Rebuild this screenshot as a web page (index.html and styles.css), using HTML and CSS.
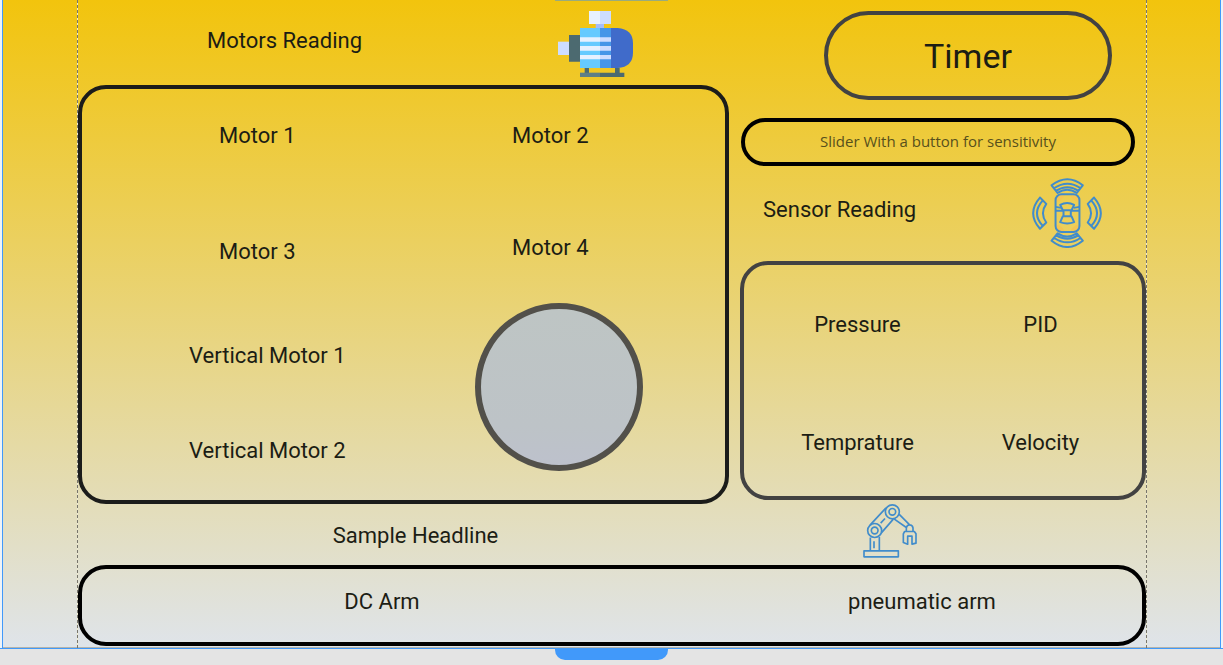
FILE: index.html
```html
<!DOCTYPE html>
<html lang="en">
<head>
<meta charset="utf-8">
<title>Motors Reading</title>
<link rel="stylesheet" href="styles.css">
</head>
<body>
<div class="frame">
  <span class="top-handle"></span>
  <div class="section">
    <main class="content">
      <div class="columns">
        <div class="column">
          <header class="motors-header">
            <h2 class="label">Motors Reading</h2>
            <svg class="motor-icon" viewBox="54 33 225 198" aria-hidden="true">
              <path fill="#4c6a70" d="M134 203h13v17h-13zM225 203h14v17h-14z"/>
              <path fill="#5f7f86" d="M120 218h60v13h-60z"/>
              <path fill="#4c6a70" d="M180 218h73v13h-73zM87 105h34v80H87z"/>
              <path fill="#cdddff" d="M54 125h33v40H54z"/>
              <path fill="#a4bdfa" d="M167 71h25v14h-25z"/>
              <path fill="#e7f1ff" d="M147 33h33v39h-33z"/>
              <path fill="#cdddff" d="M180 33h33v39h-33z"/>
              <path fill="#66caff" d="M120 84h60v120h-60z"/>
              <path fill="#4596e8" d="M180 84h33v120h-33z"/>
              <path fill="#406bca" d="M213 84h20q46 4 46 46v28q0 42-46 46h-20z"/>
              <path fill="#e7f1ff" d="M120 112h60v13h-60zM120 138h60v14h-60zM120 165h60v13h-60z"/>
              <path fill="#cdddff" d="M180 112h33v13h-33zM180 138h33v14h-33zM180 165h33v13h-33z"/>
            </svg>
          </header>
          <section class="panel motors">
            <div class="motor-list">
              <p class="label inset">Motor 1</p>
              <p class="label inset third">Motor 3</p>
              <p class="label vertical-one">Vertical Motor 1</p>
              <p class="label vertical-two">Vertical Motor 2</p>
            </div>
            <div class="motor-list">
              <p class="label nudge">Motor 2</p>
              <p class="label nudge fourth">Motor 4</p>
              <div class="dial"></div>
            </div>
          </section>
          <h2 class="label headline">Sample Headline</h2>
        </div>
        <div class="column side">
          <div class="panel timer">Timer</div>
          <button class="panel slider" type="button">Slider With a button for sensitivity</button>
          <header class="sensor-header">
            <h2 class="label">Sensor Reading</h2>
            <svg class="sensor-icon" viewBox="36 24 211 211" fill="none" stroke="#418ccb" stroke-width="6" stroke-linejoin="round" aria-hidden="true">
              <path fill="#f3c452" stroke="none" d="M108 96V86q0-12 14-13h12q-2 18-26 23zM178 96V86q0-12-14-13h-12q2 18 26 23zM108 164v10q0 12 14 13h12q-2-18-26-23zM178 164v10q0 12-14 13h-12q2-18 26-23z"/>
              <rect x="107" y="73" width="72" height="114" rx="18"/>
              <path d="M121 105q21-12 42 0l-8 16h-26zM121 157q21 8 42 0l-8-18h-26zM131 121v18M153 121v18M107 111l17 3M179 111l-17 3M107 123h24M153 123h26"/>
              <path d="M95 46q48-37 94 0l-18 23q-29-19-58 0zM102 55q41-28 81 0M108 63q35-22 68 0"/>
              <path d="M95 213q48 38 94 0l-18-22q-29 19-58 0zM102 204q41 28 81 0M108 196q35 22 68 0"/>
              <path d="M60 83q-41 47 0 94l19-19q-20-28 0-56zM68 92q-34 38 0 76"/>
              <path d="M223 83q41 47 0 94l-19-19q20-28 0-56zM215 92q34 38 0 76"/>
            </svg>
          </header>
          <section class="panel sensors">
            <p class="label">Pressure</p>
            <p class="label">PID</p>
            <p class="label">Temprature</p>
            <p class="label">Velocity</p>
          </section>
          <div class="arm-row">
            <svg class="arm-icon" viewBox="39 26 162 161" fill="none" stroke="#418ccb" stroke-width="5" stroke-linejoin="round" aria-hidden="true">
              <path d="M42 166h103v18H42zM61 126v40M88 124v42M72 137v21M60 89l48-52M94 112l36-41M92 83l13-14"/>
              <circle cx="74" cy="105" r="21" fill="#e3dfbd"/><circle cx="74" cy="105" r="10"/>
              <circle cx="127" cy="49" r="21" fill="#e3dfb8"/><circle cx="127" cy="49" r="10"/>
              <path d="M147 56l32 32M132 70l37 26M169 108V97q2-9 10-9t10 9v11M164 108h29l5 7v28l-12 3v-24h-13v24l-13-5v-26z"/>
            </svg>
          </div>
        </div>
      </div>
      <section class="panel arms">
        <p class="label">DC Arm</p>
        <p class="label pneumatic">pneumatic arm</p>
      </section>
    </main>
  </div>
</div>
<button class="resize-handle" type="button" aria-label="Resize section"></button>
</body>
</html>
```
FILE: styles.css
```css
* { box-sizing: border-box; }
body {
  margin: 0;
  min-height: 100vh;
  background: #e4e4e4;
  color: #1c1d14;
  font-family: Roboto, "Liberation Sans", sans-serif;
}
h2, p { margin: 0; }
.frame {
  position: relative;
  padding: 0 2px;
  background: #eef3f8;
  border-bottom: 1px solid #4199fa;
}
.top-handle {
  position: absolute;
  top: 0;
  left: 50%;
  width: 113px;
  height: 1px;
  margin-left: -57px;
  background: #9aab7c;
}
.section {
  padding: 0 73px 0 74px;
  border: solid #4199fa;
  border-width: 0 1px;
  background: linear-gradient(#f2c40d, #dfe4ea);
  box-shadow: inset 0 -1px #b4b4ac;
}
.content {
  padding: 0 1px 2px;
  background:
    repeating-linear-gradient(#77756c 0 3px, #eeead0 3px 5px) left / 1px 100% no-repeat,
    repeating-linear-gradient(#77756c 0 3px, #eeead0 3px 5px) right / 1px 100% no-repeat;
}
.columns {
  display: grid;
  grid-template-columns: 651fr 406fr;
  column-gap: 11px;
}
.column { display: flex; flex-direction: column; }
.side { padding-top: 11px; }
.label { font-size: 22px; line-height: 28px; font-weight: 400; }
.panel { border: 4px solid #1b1c1a; border-radius: 28px; }

.motors-header {
  display: flex;
  justify-content: space-between;
  align-items: flex-start;
  height: 85px;
  padding: 11px 96px 0 129px;
}
.motors-header .label { padding-top: 16px; }
.motor-icon { width: 75px; height: 66px; }

.motors {
  display: flex;
  justify-content: space-between;
  padding: 33px 82px 29px 107px;
}
.inset { padding-left: 30px; }
.nudge { padding-left: 37px; }
.third { margin-top: 88px; }
.fourth { margin-top: 84px; }
.vertical-one { margin-top: 76px; }
.vertical-two { margin-top: 67px; }
.dial {
  width: 168px;
  height: 168px;
  margin-top: 41px;
  border: 6px solid #52504a;
  border-radius: 50%;
  background: linear-gradient(#bec5c4, #bdc3c7 75%, #bdc1cc);
}
.headline { padding: 18px 0 15px 24px; text-align: center; }

.timer {
  margin: 0 34px 0 84px;
  padding: 20px 0 19px;
  border-color: #424242;
  border-radius: 45px;
  font-size: 34px;
  line-height: 42px;
  text-align: center;
}
.slider {
  margin: 18px 11px 0 1px;
  padding: 9px 0 11px;
  border-color: #000;
  background: none;
  color: #57501c;
  font-family: "Open Sans", "Noto Sans", sans-serif;
  font-size: 15px;
  font-weight: 400;
  line-height: 20px;
}
.sensor-header {
  display: flex;
  justify-content: space-between;
  align-items: flex-start;
  height: 95px;
  padding: 12px 44px 0 23px;
}
.sensor-header .label { padding-top: 18px; }
.sensor-icon { width: 70px; height: 70px; }
.sensors {
  display: grid;
  grid-template-columns: 1fr 1fr;
  row-gap: 90px;
  padding: 46px 10px 39px 22px;
  border-color: #424242;
  text-align: center;
}
.arm-row { padding: 4px 0 0 123px; }
.arm-icon { display: block; width: 54px; height: 54px; }
.arms {
  display: grid;
  grid-template-columns: 600fr 460fr;
  padding: 19px 0 26px;
  border-color: #000;
  text-align: center;
}
.pneumatic { padding-left: 20px; }
.resize-handle {
  display: block;
  width: 113px;
  height: 11px;
  margin: 0 auto;
  padding: 0;
  border: 0;
  border-radius: 0 0 10px 10px;
  background: #4199fa;
}
```
